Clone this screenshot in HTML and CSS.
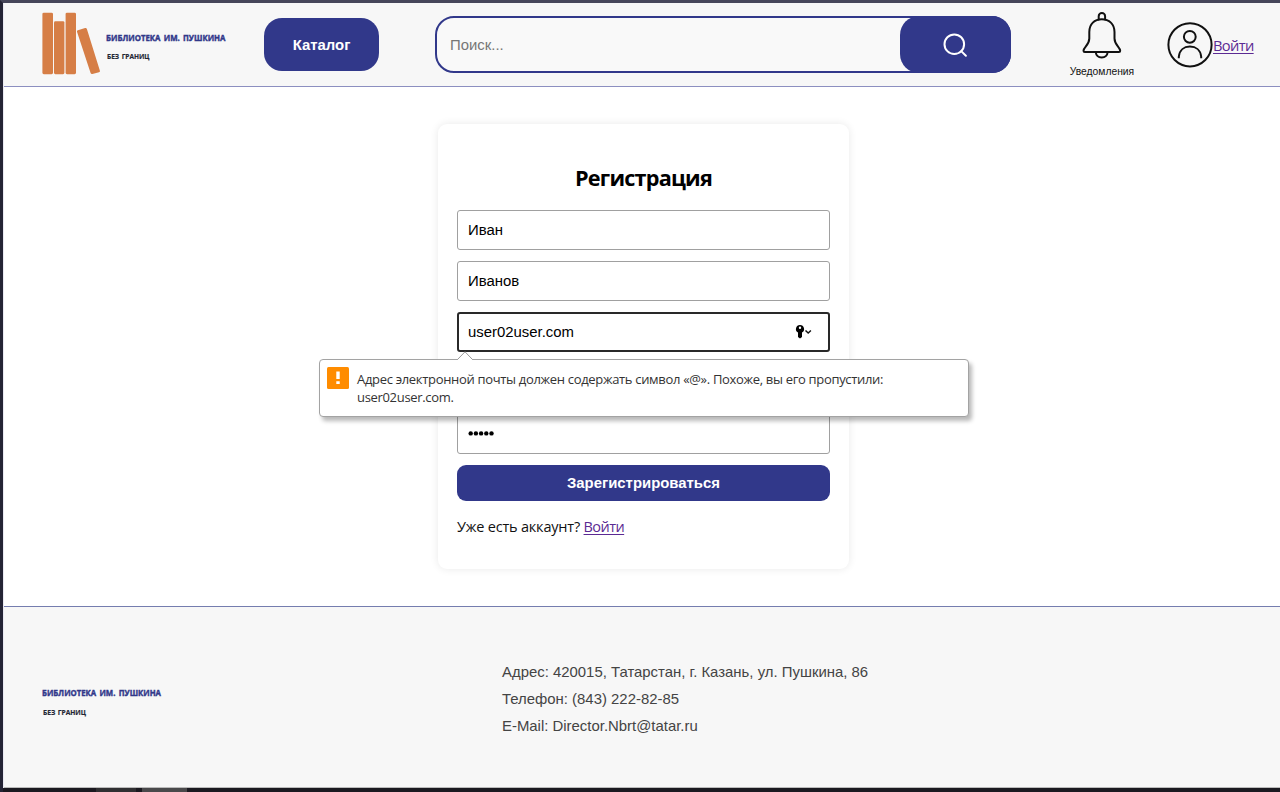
FILE: index.html
```
<!DOCTYPE html>
<html lang="ru">
<head>
<meta charset="utf-8">
<title>Регистрация</title>
<link rel="stylesheet" href="styles.css">
</head>
<body>
<div class="window">
  <div class="page">
    <header class="header">
      <svg class="books" width="60" height="64" viewBox="0 0 60 64" fill="#d67e46">
        <rect x=".4" y=".7" width="10.6" height="61.5" rx="1.4"/>
        <rect x="12" y="9.2" width="10.4" height="53" rx="1.4"/>
        <rect x="23.6" y=".7" width="10.4" height="61.5" rx="1.4"/>
        <path d="M35.9 18.2l7.2-2.2q1.3-.3 1.8 1l13 41.7q.4 1.3-.9 1.6l-6.6 1.7q-1.3.3-1.8-1L35 19.7q-.4-1.2.9-1.5z"/>
      </svg>
      <svg class="brand" width="126" height="36" viewBox="0 0 126 36">
        <text class="brand-name" x="0" y="13.6" textLength="119.5" lengthAdjust="spacingAndGlyphs">БИБЛИОТЕКА ИМ. ПУШКИНА</text>
        <text class="brand-tag" x="1" y="31.9" textLength="42.5" lengthAdjust="spacingAndGlyphs">БЕЗ ГРАНИЦ</text>
      </svg>
      <button class="catalog">Каталог</button>
      <div class="search">
        <span class="search-text">Поиск...</span>
        <button class="search-button" aria-label="Найти">
          <svg width="26" height="26" viewBox="0 0 26 26" fill="none" stroke="#fff" stroke-width="2"><circle cx="12.3" cy="12.2" r="9.8"/><path d="M19.2 19.1l4.7 4.6" stroke-linecap="round"/></svg>
        </button>
      </div>
      <div class="notice">
        <svg width="40" height="48" viewBox="0 0 40 48" fill="none" stroke="#111" stroke-width="2" stroke-linejoin="round" stroke-linecap="round">
          <path d="M16.7 7.4V4.3a3.2 3.2 0 0 1 6.4 0v3.1"/>
          <path d="M7.3 20C7.3 12 12.5 7.2 19.8 7.2S32.5 12 32.5 20v6.5c0 6.5 5.7 8.8 5.7 12.2q0 1.3-1.3 1.3H2.8q-1.3 0-1.3-1.3c0-3.4 5.8-5.7 5.8-12.2z"/>
          <path d="M13.8 40.5c.8 6.5 11 6.5 11.8 0"/>
        </svg>
        <span class="notice-label">Уведомления</span>
      </div>
      <div class="account">
        <svg width="46" height="46" viewBox="0 0 46 46" fill="none" stroke="#111" stroke-width="2"><circle cx="23" cy="22.8" r="21.6"/><circle cx="22.8" cy="14.8" r="5.9"/><path d="M11.8 36.3v-1.5C12.5 28 17 24.600 22.9 24.600S33.600 28 34.200 34.800v1.5"/></svg>
        <a class="link" href="#">Войти</a>
      </div>
    </header>
    <main class="main">
      <form class="card">
        <h1 class="title">Регистрация</h1>
        <div class="field">Иван</div>
        <div class="field">Иванов</div>
        <div class="field focused"><span>user02user.com</span>
          <svg class="key" width="18" height="16" viewBox="0 0 18 16"><path fill="#000" fill-rule="evenodd" d="M5 1a4 4 0 0 1 2 7.5V13l-2 1.5L3 13V8.500A4 4 0 0 1 5 1zm0 1.600a1.200 1.200 0 1 0 0 2.400 1.200 1.200 0 0 0 0-2.400z"/><path d="M10.500 6.500L13.200 9l2.700-2.500" fill="none" stroke="#111" stroke-width="1.5"/></svg>
          <div class="bubble">
            <svg class="pointer" width="16" height="9" viewBox="0 0 16 9"><path d="M.5 8.500L8 .8l7.500 7.700" fill="#fff" stroke="#999"/><path d="M1 8.500h14" stroke="#fff"/></svg>
            <span class="warning"><svg width="22" height="22" viewBox="0 0 22 22"><rect width="22" height="22" rx="1.5" fill="#ff8c00"/><path d="M9.300 4.500h3.400v7.500H9.300zM9.300 14.200h3.400v2.900H9.300z" fill="#fff"/></svg></span>
            <div class="bubble-text">Адрес электронной почты должен содержать символ «@». Похоже, вы его пропустили:<br>user02user.com.</div>
          </div>
        </div>
        <div class="field"></div>
        <div class="field"><svg class="dots" width="28" height="8" viewBox="0 0 28 8"><circle cx="2.7" cy="4.4" r="2.2"/><circle cx="7.9" cy="4.4" r="2.2"/><circle cx="13.1" cy="4.4" r="2.2"/><circle cx="18.3" cy="4.4" r="2.2"/><circle cx="23.5" cy="4.4" r="2.2"/></svg></div>
        <button class="submit" type="button">Зарегистрироваться</button>
        <p class="login">Уже есть аккаунт? <a class="link" href="#">Войти</a></p>
      </form>
    </main>
    <footer class="footer">
      <svg class="footer-brand" width="126" height="36" viewBox="0 0 126 36">
        <text class="brand-name" x="0" y="13.6" textLength="119" lengthAdjust="spacingAndGlyphs">БИБЛИОТЕКА ИМ. ПУШКИНА</text>
        <text class="brand-tag" x="1" y="33.4" textLength="43" lengthAdjust="spacingAndGlyphs">БЕЗ ГРАНИЦ</text>
      </svg>
      <address class="contacts">
        <span>Адрес: 420015, Татарстан, г. Казань, ул. Пушкина, 86</span>
        <span>Телефон: (843) 222-82-85</span>
        <span>E-Mail: Director.Nbrt@tatar.ru</span>
      </address>
    </footer>
  </div>
  <div class="taskbar"><i class="task"></i><i class="task active"></i></div>
</div>
</body>
</html>
```
FILE: styles.css
```
* { box-sizing: border-box; }
body { margin: 0; font-family: "Liberation Sans", Arial, sans-serif; background: #fff; }
button { font: inherit; border: 0; padding: 0; }
.window { width: 1280px; height: 792px; border-left: 3px solid #242435; border-top: 3px solid #46465a; display: flex; flex-direction: column; overflow: hidden; }
.page { flex: 1; display: flex; flex-direction: column; border-left: 1px solid #e9e9f2; }
.header { height: 84px; background: #f7f7f7; border-bottom: 1px solid #8c8fc0; display: flex; align-items: flex-start; padding-left: 38px; }
.books { margin-top: 9px; }
.brand { margin: 24px 0 0 4px; overflow: visible; }
.brand-name { font: bold 9.4px "Open Sans", sans-serif; word-spacing: 1.5px; fill: #31388a; stroke: #31388a; stroke-width: .45px; }
.brand-tag { font: bold 7.6px "Open Sans", sans-serif; word-spacing: 1px; fill: #222633; stroke: #222633; stroke-width: .2px; }
.catalog { width: 115px; height: 53px; margin: 15px 0 0 32px; border-radius: 18px; background: #31388a; color: #fff; font-weight: bold; font-size: 14.9px; }
.search { width: 576px; height: 57px; margin: 13px 0 0 56px; border: 2px solid #31388a; border-radius: 19px; background: #f9f9f9; display: flex; align-items: center; justify-content: space-between; padding-left: 13px; }
.search-text { font-size: 14.9px; color: #777; }
.search-button { width: 111px; height: 57px; margin: -2px; padding-right: 2px; border-radius: 19px; background: #31388a; display: flex; align-items: center; justify-content: center; }
.notice { width: 70px; margin: 9px 0 0 56px; display: flex; flex-direction: column; align-items: center; }
.notice-label { font-size: 10.3px; line-height: 12px; margin-top: 6px; color: #111; }
.account { display: flex; align-items: center; margin: 19px 0 0 30px; font: 14.7px "Open Sans", sans-serif; letter-spacing: -.65px; }
.account .link { margin-top: 0; }
.link { color: #5b2a93; text-decoration: underline; text-underline-offset: 2px; text-decoration-thickness: 1px; }
.main { height: 519px; display: flex; justify-content: center; padding: 37px 0 0 3px; }
.card { width: 411px; height: 445px; border-radius: 9px; padding: 0 19px; box-shadow: 0 0 9px rgba(0,0,0,.09); background: #fff; display: flex; flex-direction: column; }
.title { margin: 38px 0 16px; font: bold 21.7px/32px "Open Sans", sans-serif; letter-spacing: -.8px; text-align: center; color: #000; }
.field { height: 40px; margin-bottom: 11px; border: 1px solid #a0a0a0; border-radius: 3px; padding: 0 10px; display: flex; align-items: center; justify-content: space-between; font-size: 14.9px; color: #000; flex: none; position: relative; }
.focused { border: 2px solid #292929; padding: 0 15px 0 9px; }
.dots { margin-top: -2px; }
.bubble { position: absolute; z-index: 2; left: -140px; top: 45px; width: 650px; height: 58px; border: 1px solid #a3a3a3; border-radius: 4px; background: #fff; box-shadow: 3px 4px 4px rgba(0,0,0,.28); display: flex; padding: 7px; }
.pointer { position: absolute; left: 137px; top: -9px; }
.bubble-text { margin: 4px 0 0 8px; font: 13px/17.5px "Open Sans", sans-serif; letter-spacing: -.32px; color: #333; white-space: nowrap; }
.submit { height: 36px; border-radius: 9px; background: #31388a; color: #fff; font-weight: bold; font-size: 14.9px; flex: none; }
.login { margin: 15px 0 0; font: 14.5px/21px "Open Sans", sans-serif; letter-spacing: -.2px; color: #111; }
.login .link { letter-spacing: -.55px; }
.footer { height: 182px; background: #f7f7f7; border-top: 1px solid #757daf; border-bottom: 1px solid #bbb; display: flex; padding-left: 38px; align-items: flex-start; }
.footer-brand { margin-top: 75px; overflow: visible; }
.contacts { margin: 52px 0 0 334px; font-style: normal; font-size: 14.92px; line-height: 26.9px; color: #444; display: flex; flex-direction: column; }
.taskbar { height: 4px; background: #1b1920; display: flex; gap: 6px; padding-left: 93px; flex: none; }
.task { width: 40px; background: #302f32; }
.active { width: 45px; background: #4a494b; }
```
